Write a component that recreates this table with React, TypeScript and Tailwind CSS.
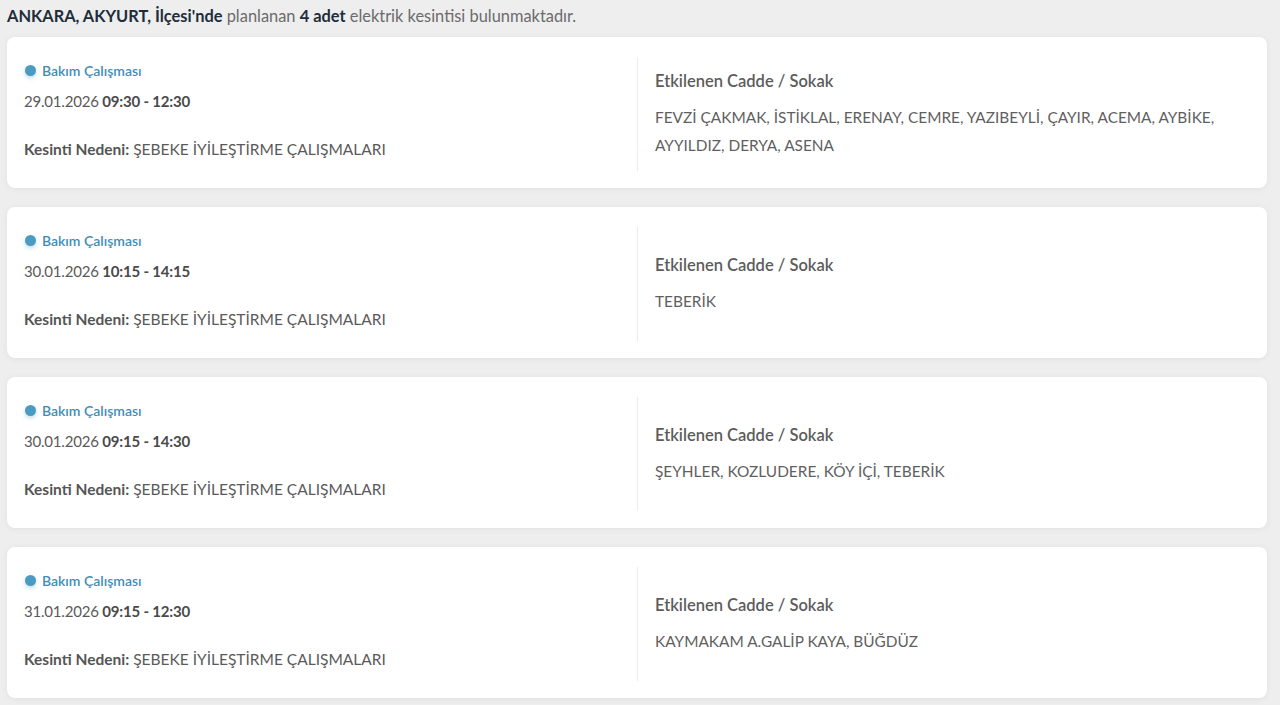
import { Fragment } from 'react';

interface Outage {
  date: string;
  time: string;
  streets: string;
}

const outages: Outage[] = [
  {
    date: '29.01.2026',
    time: '09:30 - 12:30',
    streets: 'FEVZİ ÇAKMAK, İSTİKLAL, ERENAY, CEMRE, YAZIBEYLİ, ÇAYIR, ACEMA, AYBİKE, AYYILDIZ, DERYA, ASENA',
  },
  { date: '30.01.2026', time: '10:15 - 14:15', streets: 'TEBERİK' },
  { date: '30.01.2026', time: '09:15 - 14:30', streets: 'ŞEYHLER, KOZLUDERE, KÖY İÇİ, TEBERİK' },
  { date: '31.01.2026', time: '09:15 - 12:30', streets: 'KAYMAKAM A.GALİP KAYA, BÜĞDÜZ' },
];

function OutageCard({ outage }: { outage: Outage }) {
  return (
    <div className="grid grid-cols-2 rounded-lg bg-white px-[17px] pt-5 pb-[17px] shadow-[0_1px_6px_rgba(0,0,0,0.06)]">
      {/* Left: type, date, reason */}
      <div className="flex flex-col pt-[3px] pb-[11px]">
        <div className="flex h-5 items-center gap-[6px]">
          <span className="ml-[1px] h-[11px] w-[11px] rounded-full bg-[#4b9ac2] shadow-[0_2px_4px_rgba(75,154,194,0.35)]" />
          <span className="text-[14px] font-semibold text-[#3f8db6]">Bakım Çalışması</span>
        </div>
        <div className="mt-[10px] text-[15px] leading-[22px] tracking-[-0.2px] text-[#5a5a5a]">
          {outage.date} <span className="font-bold text-[#4a4a4a]">{outage.time}</span>
        </div>
        <div className="mt-[26px] text-[15.5px] leading-[22px] text-[#5a5a5a]">
          <span className="font-bold text-[#555]">Kesinti Nedeni:</span> ŞEBEKE İYİLEŞTİRME ÇALIŞMALARI
        </div>
      </div>

      {/* Right: affected streets */}
      <div className="flex flex-col justify-center border-l border-[#ececec] pl-[17px] pr-8">
        <div className="text-[16.5px] font-semibold leading-[22px] text-[#5c5c5c]">Etkilenen Cadde / Sokak</div>
        <div className="mt-[11px] text-[15.4px] leading-[28px] text-[#5f5f5f]">{outage.streets}</div>
      </div>
    </div>
  );
}

export default function App() {
  return (
    <div
      className="min-h-[705px] bg-[#eeeeef] pl-[7px] pr-[13px] pt-[5px] pb-[7px]"
      style={{ fontFamily: 'Lato, "Noto Sans", sans-serif' }}
    >
      <p className="mb-[10px] text-[16.4px] leading-[22px] text-[#6b6b6b]">
        <span className="font-bold text-[#1f2d3a]">ANKARA, AKYURT, İlçesi'nde</span> planlanan{' '}
        <span className="font-bold text-[#1f2d3a]">4 adet</span> elektrik kesintisi bulunmaktadır.
      </p>
      <div className="flex flex-col gap-[19px]">
        {outages.map((o, i) => (
          <Fragment key={i}>
            <OutageCard outage={o} />
          </Fragment>
        ))}
      </div>
    </div>
  );
}
